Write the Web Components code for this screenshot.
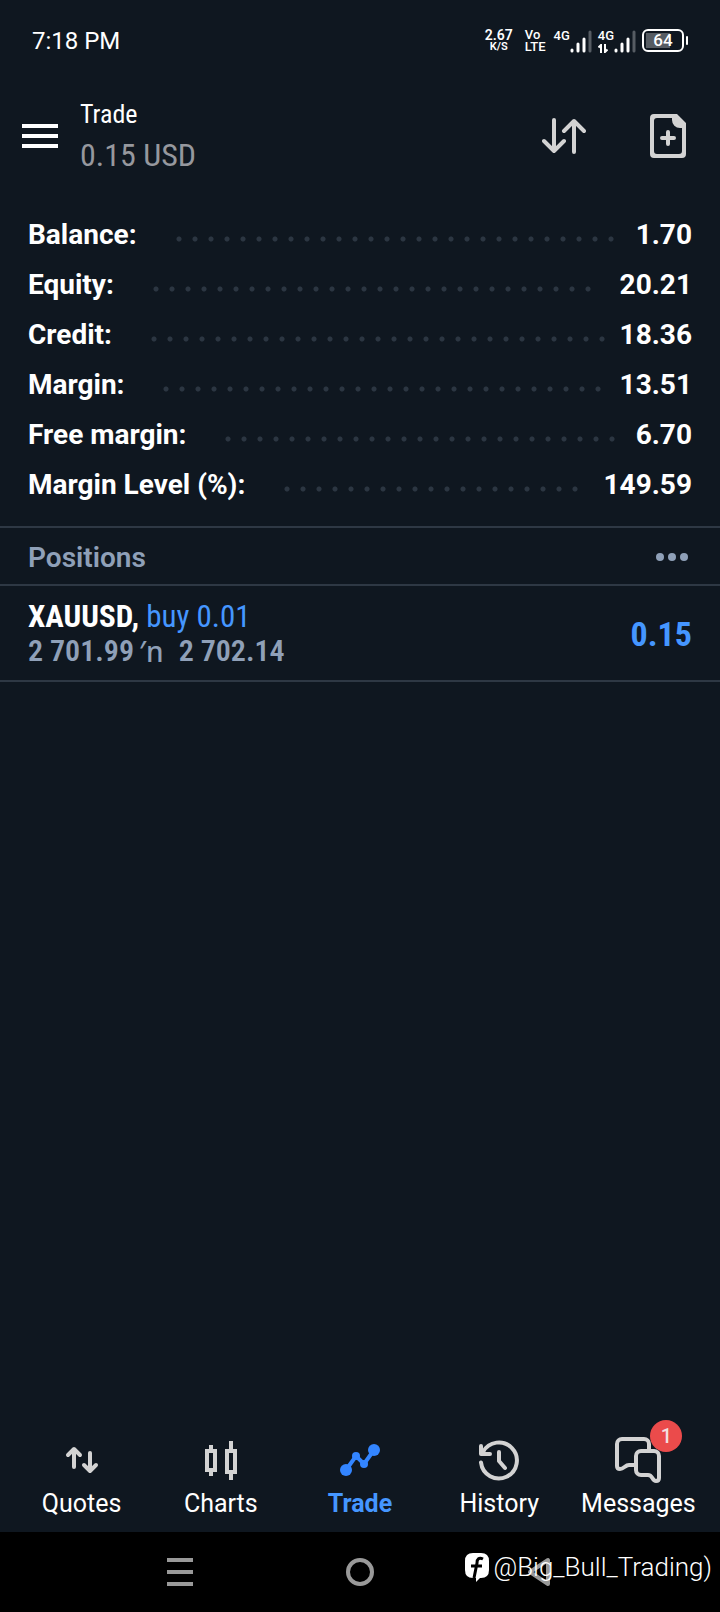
<!DOCTYPE html>
<html lang="en">
<head>
<meta charset="UTF-8">
<meta name="viewport" content="width=device-width, initial-scale=1">
<title>Trade</title>
<style>
    :root {
        --bg: #0f1720;
        --line: #2e3844;
        --text: #ffffff;
        --muted: #8fa0b8;
        --blue: #4596ff;
        --icon: #d3d3d3;
        --condensed: "Roboto Condensed", "Liberation Sans Narrow", Roboto, sans-serif;
    }
    body {
        margin: 0;
        background: var(--bg);
        color: var(--text);
        font-family: Roboto, sans-serif;
    }
</style>
</head>
<body>
<trade-app></trade-app>

<script>
const define = (name, markup, setup) => {
    const template = document.createElement('template');
    template.innerHTML = markup;
    customElements.define(name, class extends HTMLElement {
        constructor() {
            super();
            this.attachShadow({ mode: 'open' }).appendChild(template.content.cloneNode(true));
        }

        connectedCallback() {
            if (setup) {
                setup(this, this.shadowRoot);
            }
        }
    });
};

define('signal-bars', `
    <style>
        :host { display: flex; align-items: flex-end; height: 24px; }
        .net { display: flex; flex-direction: column; align-items: flex-start; justify-content: space-between; height: 24px; font-size: 13px; line-height: 14px; font-weight: 500; }
        .data { visibility: hidden; }
        :host([active]) .data { visibility: visible; }
        svg { display: block; }
    </style>
    <div class="net">
        <span>4G</span>
        <svg class="data" width="10" height="9" viewBox="0 0 10 9" fill="none" stroke="#fff" stroke-width="2"><path d="M3 9V1L0.5 3.5M7 0v8l2.5-2.5"/></svg>
    </div>
    <svg width="22" height="24" viewBox="0 0 22 24" stroke-width="3" stroke-linecap="round"><path stroke="#fff" d="M2 21v1M8 15v7M14 10v12"/><path stroke="#565c63" d="M20 3v19"/></svg>
`);

define('status-bar', `
    <style>
        :host { display: flex; align-items: center; justify-content: space-between; height: 80px; padding: 1px 32px 0; box-sizing: border-box; }
        time { font-size: 24px; line-height: 28px; }
        .right { display: flex; align-items: center; }
        .pair { display: flex; flex-direction: column; align-items: center; line-height: 12px; font-weight: 600; }
        .rate { font-size: 14px; margin-right: 12px; }
        .rate small { font-size: 11px; }
        .volte { align-items: flex-start; font-size: 13px; font-weight: 500; margin-right: 8px; }
        signal-bars { margin-right: 6px; }
        .battery { display: flex; align-items: center; gap: 2px; }
        .cell { display: flex; align-items: center; justify-content: center; box-sizing: border-box; width: 42px; height: 23px; border: 2px solid #fff; border-radius: 6px; background: linear-gradient(#565c63, #565c63) 2px center / 24px 15px no-repeat; font-size: 17px; font-weight: 500; line-height: 19px; }
        .nub { width: 2px; height: 9px; border-radius: 1px; background: #fff; }
    </style>
    <time>7:18 PM</time>
    <div class="right">
        <div class="pair rate"><span>2.67</span><small>K/S</small></div>
        <div class="pair volte"><span>Vo</span><span>LTE</span></div>
        <signal-bars></signal-bars>
        <signal-bars active></signal-bars>
        <div class="battery"><span class="cell">64</span><span class="nub"></span></div>
    </div>
`);

define('app-header', `
    <style>
        :host { display: flex; align-items: center; height: 112px; padding: 0 34px 0 22px; box-sizing: border-box; }
        button { display: block; padding: 0; border: 0; background: none; color: var(--icon); }
        svg { display: block; }
        .menu { color: #fff; margin-right: 22px; }
        .titles { flex: 1; font-family: var(--condensed); }
        h1 { margin: 0; font-size: 26px; line-height: 38px; font-weight: 400; }
        p { margin: 0; font-size: 32px; line-height: 44px; color: #96989e; }
        .actions { display: flex; gap: 64px; }
    </style>
    <button class="menu" aria-label="Menu">
        <svg width="36" height="24" viewBox="0 0 36 24" fill="currentColor"><path d="M0 0h36v4H0zM0 10h36v4H0zM0 20h36v4H0z"/></svg>
    </button>
    <div class="titles">
        <h1>Trade</h1>
        <p>0.15 USD</p>
    </div>
    <div class="actions">
        <button aria-label="Sort">
            <svg width="44" height="44" viewBox="0 0 44 44" fill="none" stroke="currentColor" stroke-width="4" stroke-linecap="round" stroke-linejoin="round"><path d="M12 6v31M2 27l10 10 10-10M32 38V7M22 17L32 7l10 10"/></svg>
        </button>
        <button aria-label="New order">
            <svg width="36" height="44" viewBox="0 0 36 44" fill="currentColor">
                <path fill-rule="evenodd" d="M4 0H27L36 9V40a4 4 0 0 1-4 4H4a4 4 0 0 1-4-4V4a4 4 0 0 1 4-4zM7 4a3 3 0 0 0-3 3V37a3 3 0 0 0 3 3H29a3 3 0 0 0 3-3V14H30A8 8 0 0 1 22 6V4z"/>
                <path d="M18 18v12M12 24h12" stroke="currentColor" stroke-width="4" stroke-linecap="round"/>
            </svg>
        </button>
    </div>
`);

define('account-row', `
    <style>
        :host { display: flex; align-items: center; height: 50px; font-size: 28px; font-weight: 700; }
        .dots { flex: 1; min-width: 0; margin: 10px 14px 0 39px; }
        /* whole dots only: a 6px dot fits where a full 16px step would not */
        .dots::before { content: ''; display: block; width: round(down, 100% + 10px, 16px); height: 6px; background: radial-gradient(circle at 3px 3px, #2c3642 2px, transparent 3px) 0 0 / 16px 6px repeat-x; }
    </style>
    <span><slot></slot></span>
    <span class="dots"></span>
    <span><slot name="value"></slot></span>
`);

define('account-summary', `
    <style>
        :host { display: block; padding: 17px 28px; border-bottom: 2px solid var(--line); }
    </style>
`, (host, root) => {
    const rows = [
        ['Balance:', '1.70'],
        ['Equity:', '20.21'],
        ['Credit:', '18.36'],
        ['Margin:', '13.51'],
        ['Free margin:', '6.70'],
        ['Margin Level (%):', '149.59']
    ];
    rows.forEach(([label, value]) => {
        const row = document.createElement('account-row');
        row.innerHTML = `${label}<span slot="value">${value}</span>`;
        root.appendChild(row);
    });
});

define('positions-heading', `
    <style>
        :host { display: flex; align-items: center; justify-content: space-between; height: 58px; padding: 2px 32px 0 28px; box-sizing: border-box; border-bottom: 2px solid var(--line); color: var(--muted); }
        h2 { margin: 0; padding-top: 2px; font-size: 28px; line-height: 32px; font-weight: 600; }
        button { padding: 0; border: 0; background: none; color: inherit; }
        svg { display: block; }
    </style>
    <h2><slot></slot></h2>
    <button aria-label="More">
        <svg width="32" height="8" viewBox="0 0 32 8" fill="currentColor"><circle cx="4" cy="4" r="4"/><circle cx="16" cy="4" r="4"/><circle cx="28" cy="4" r="4"/></svg>
    </button>
`);

define('position-row', `
    <style>
        :host { display: flex; align-items: center; justify-content: space-between; padding: 14px 28px 12px; border-bottom: 2px solid var(--line); font-family: var(--condensed); font-size: 31px; line-height: 34px; font-weight: 700; }
        .side { color: var(--blue); font-weight: 400; }
        .prices { display: flex; color: var(--muted); font-size: 30px; font-weight: 600; }
        .mark { margin: 0 15px 0 5px; font-family: "Noto Sans", sans-serif; font-size: 28px; font-weight: 500; }
        .profit { color: var(--blue); font-size: 34px; }
    </style>
    <div>
        <div><slot name="symbol"></slot>, <span class="side"><slot name="side"></slot></span></div>
        <div class="prices"><slot name="open"></slot><span class="mark">′n</span><slot name="price"></slot></div>
    </div>
    <div class="profit"><slot name="profit"></slot></div>
`);

define('nav-tab', `
    <style>
        :host { flex: 1; min-width: 0; }
        a { display: flex; flex-direction: column; align-items: center; gap: 6px; color: var(--text); text-decoration: none; font-size: 25px; line-height: 28px; }
        :host([current]) a { color: var(--blue); font-weight: 700; }
        .icon { position: relative; color: var(--icon); }
        :host([current]) .icon { color: #3385ff; }
        ::slotted(svg) { display: block; width: 48px; height: 48px; }
        ::slotted(b) { position: absolute; top: -16px; right: -20px; width: 32px; height: 32px; border-radius: 50%; background: #eb4b4b; color: #f2dede; font-size: 20px; line-height: 32px; font-weight: 500; text-align: center; }
    </style>
    <a href="#"><span class="icon"><slot name="icon"></slot><slot name="badge"></slot></span><span><slot></slot></span></a>
`);

define('bottom-nav', `
    <style>
        :host { display: block; }
        nav { display: flex; padding: 0 12px 14px; }
    </style>
    <nav>
        <nav-tab>
            <svg slot="icon" viewBox="0 0 48 48" fill="none" stroke="currentColor" stroke-width="4" stroke-linecap="round" stroke-linejoin="round"><path d="M16 31V14M10 19l6-6 6 6M32 17v17M26 29l6 6 6-6"/></svg>Quotes
        </nav-tab>
        <nav-tab>
            <svg slot="icon" viewBox="0 0 48 48" fill="none" stroke="currentColor" stroke-width="4"><path d="M10 15h8v19h-8zM14 9v6M14 34v6M30 15h8v21h-8zM34 5v10M34 36v8"/></svg>Charts
        </nav-tab>
        <nav-tab current>
            <svg slot="icon" viewBox="0 0 48 48" fill="currentColor"><path d="M10 34l10-14 8 8 10-14" fill="none" stroke="currentColor" stroke-width="4"/><circle cx="10" cy="34" r="6"/><circle cx="20" cy="20" r="4"/><circle cx="28" cy="28" r="4"/><circle cx="38" cy="14" r="6"/></svg>Trade
        </nav-tab>
        <nav-tab>
            <svg slot="icon" viewBox="0 0 48 48" fill="none" stroke="currentColor" stroke-width="4" stroke-linecap="round" stroke-linejoin="round"><path d="M6 26.500A18 18 0 1 0 8 16M6 10v8h9M24 16v9l6 7"/></svg>History
        </nav-tab>
        <nav-tab>
            <svg slot="icon" viewBox="0 0 48 48" fill="none" stroke="currentColor" stroke-width="4" stroke-linejoin="round"><path d="M22 29H15c-4 0-5 4-9 4-2 0-3-1-3-3V8a5 5 0 0 1 5-5H30a5 5 0 0 1 5 5v6M27 15h13a5 5 0 0 1 5 5v22c0 2-1 3-3 3-4 0-3-6-8-6H27a5 5 0 0 1-5-5V20a5 5 0 0 1 5-5z"/></svg><b slot="badge">1</b>Messages
        </nav-tab>
    </nav>
`);

define('system-bar', `
    <style>
        :host { display: flex; position: relative; height: 80px; padding: 0 12.5%; background: #000; }
        button { flex: 1; display: flex; align-items: center; justify-content: center; padding: 0; border: 0; background: none; color: #999; }
        .credit { position: absolute; right: 8px; top: 19px; display: flex; align-items: center; gap: 3px; font-size: 26px; line-height: 32px; font-weight: 300; white-space: nowrap; }
    </style>
    <button aria-label="Recents"><svg width="26" height="28" viewBox="0 0 26 28" fill="currentColor"><path d="M0 0h26v4H0zM0 12h26v4H0zM0 24h26v4H0z"/></svg></button>
    <button aria-label="Home"><svg width="28" height="28" viewBox="0 0 28 28" fill="none" stroke="currentColor" stroke-width="4"><circle cx="14" cy="14" r="12"/></svg></button>
    <button aria-label="Back"><svg width="26" height="30" viewBox="0 0 26 30" fill="none" stroke="currentColor" stroke-width="4" stroke-linejoin="round"><path d="M21 3v24L3 15z"/></svg></button>
    <div class="credit">
        <svg width="26" height="30" viewBox="0 0 26 30"><path fill="#fff" d="M9 1h8q8 0 8 8v9q0 8-8 8h-1l-4 4v-4H9q-8 0-8-8V9q0-8 8-8z"/><path d="M19 7c-4-2-6 0-6 4l-3 15M7 14h11" fill="none" stroke="#000" stroke-width="3"/></svg>
        <span>@Big_Bull_Trading)</span>
    </div>
`);

define('trade-app', `
    <style>
        :host { display: flex; flex-direction: column; min-height: 100vh; }
        main { flex: 1; }
    </style>
    <status-bar></status-bar>
    <app-header></app-header>
    <main>
        <account-summary></account-summary>
        <positions-heading>Positions</positions-heading>
        <position-row>
            <span slot="symbol">XAUUSD</span>
            <span slot="side">buy 0.01</span>
            <span slot="open">2 701.99</span>
            <span slot="price">2 702.14</span>
            <span slot="profit">0.15</span>
        </position-row>
    </main>
    <bottom-nav></bottom-nav>
    <system-bar></system-bar>
`);
</script>
</body>
</html>
